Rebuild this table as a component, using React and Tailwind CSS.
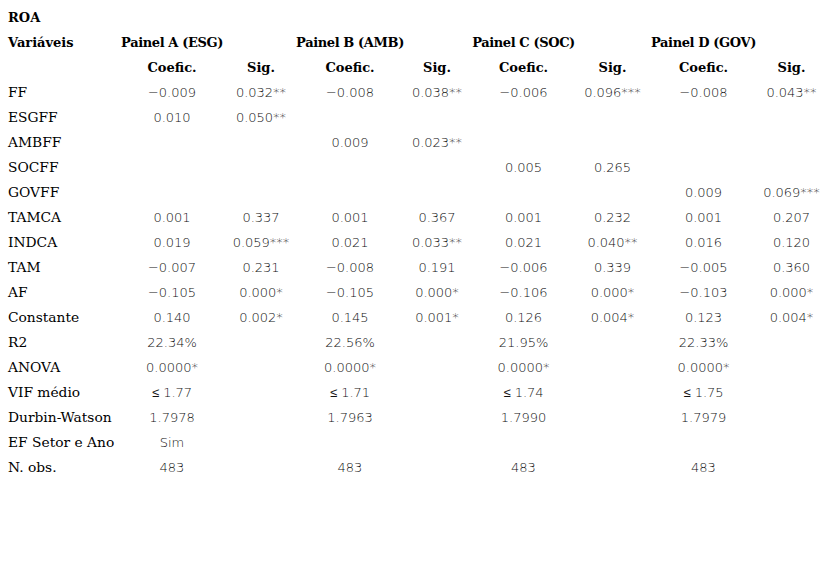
const rows = [
  ["FF", "-0.009", "0.032**", "-0.008", "0.038**", "-0.006", "0.096***", "-0.008", "0.043**"],
  ["ESGFF", "0.010", "0.050**", "", "", "", "", "", ""],
  ["AMBFF", "", "", "0.009", "0.023**", "", "", "", ""],
  ["SOCFF", "", "", "", "", "0.005", "0.265", "", ""],
  ["GOVFF", "", "", "", "", "", "", "0.009", "0.069***"],
  ["TAMCA", "0.001", "0.337", "0.001", "0.367", "0.001", "0.232", "0.001", "0.207"],
  ["INDCA", "0.019", "0.059***", "0.021", "0.033**", "0.021", "0.040**", "0.016", "0.120"],
  ["TAM", "-0.007", "0.231", "-0.008", "0.191", "-0.006", "0.339", "-0.005", "0.360"],
  ["AF", "-0.105", "0.000*", "-0.105", "0.000*", "-0.106", "0.000*", "-0.103", "0.000*"],
  ["Constante", "0.140", "0.002*", "0.145", "0.001*", "0.126", "0.004*", "0.123", "0.004*"],
  ["R2", "22.34%", "", "22.56%", "", "21.95%", "", "22.33%", ""],
  ["ANOVA", "0.0000*", "", "0.0000*", "", "0.0000*", "", "0.0000*", ""],
  ["VIF médio", "≤ 1.77", "", "≤ 1.71", "", "≤ 1.74", "", "≤ 1.75", ""],
  ["Durbin-Watson", "1.7978", "", "1.7963", "", "1.7990", "", "1.7979", ""],
  ["EF Setor e Ano", "Sim", "", "", "", "", "", "", ""],
  ["N. obs.", "483", "", "483", "", "483", "", "483", ""],
];

const grid = "grid grid-cols-[128px_88px_90px_88px_86px_87px_91px_91px_85px] h-[25px] items-center";
const serif = "font-['DejaVu_Serif','Liberation_Serif',serif]";
const head = `flex justify-center text-[13px] font-bold whitespace-nowrap ${serif}`;

function Row({ cells }) {
  return (
    <div className={grid}>
      <div className={`pl-2 text-[13.8px] whitespace-nowrap ${serif}`}>{cells[0]}</div>
      {cells.slice(1).map((c, i) => (
        <div key={i} className="flex justify-center text-[13px] font-extralight text-[#111] whitespace-nowrap font-['DejaVu_Sans',sans-serif]">
          {c.replace(/-/g, "\u2212")}
        </div>
      ))}
    </div>
  );
}

export default function App() {
  return (
    <div className="w-[834px] h-[585px] bg-white text-black pt-[5px]">
      <div className={grid}>
        <div className={`pl-2 text-[13px] font-bold ${serif}`}>ROA</div>
      </div>
      <div className={grid}>
        <div className={`pl-2 text-[13px] font-bold ${serif}`}>Variáveis</div>
        {["Painel A (ESG)", "Painel B (AMB)", "Painel C (SOC)", "Painel D (GOV)"].map((p) => (
          <div key={p} className="col-span-2 grid grid-cols-subgrid">
            <div className={`${head} tracking-[-0.03em]`}>{p}</div>
          </div>
        ))}
      </div>
      <div className={grid}>
        <div />
        {[0, 1, 2, 3].flatMap((i) => [
          <div key={"c" + i} className={head}>Coefic.</div>,
          <div key={"s" + i} className={head}>Sig.</div>,
        ])}
      </div>
      {rows.map((r) => (
        <Row key={r[0]} cells={r} />
      ))}
    </div>
  );
}
